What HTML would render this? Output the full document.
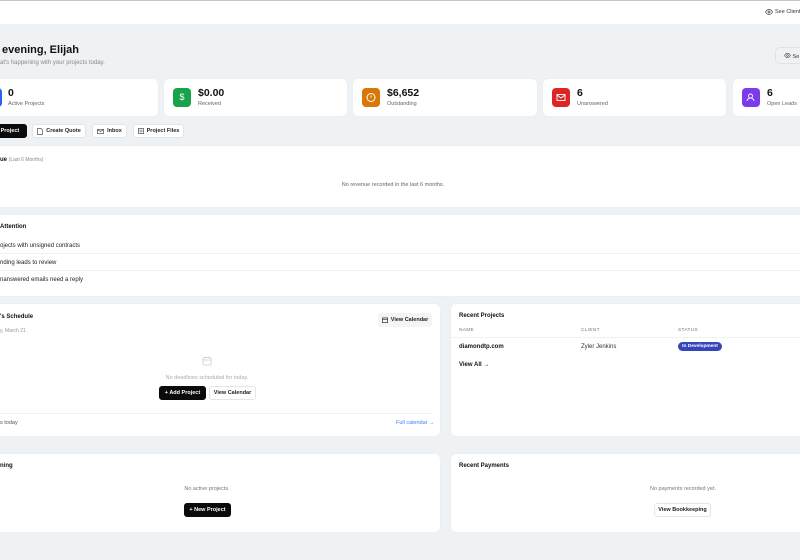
<!DOCTYPE html>
<html><head><meta charset="utf-8"><style>
*{margin:0;padding:0;box-sizing:border-box}
body{width:800px;height:560px;overflow:hidden;background:#eff2f5;font-family:"Liberation Sans",sans-serif;color:#111;position:relative}
.a{position:absolute;white-space:nowrap}
.card{position:absolute;background:#fff;border-radius:5px;box-shadow:0 0 1px rgba(0,0,0,.08)}
.ic{position:absolute;width:18px;height:19px;border-radius:4px;top:9px;left:9px}
.val{position:absolute;left:34px;top:8px;font-size:10.5px;font-weight:bold}
.lab{position:absolute;left:34px;top:22px;font-size:5.5px;color:#666}
.btn{position:absolute;height:14px;border:1px solid #e3e5e8;border-radius:3px;background:#fff;font-size:5.5px;font-weight:bold;display:flex;align-items:center;justify-content:center;gap:3px;color:#222}
.blk{background:#0b0b0b;color:#fff;border-color:#0b0b0b}
.t{font-size:6.5px;font-weight:bold}
.m{font-size:5.5px;color:#777}
.row{font-size:6px;color:#222}
.hr{position:absolute;height:1px;background:#f0f1f3}
</style></head><body>
<div class="a" style="left:0;top:0;width:800px;height:24px;background:#fff;border-top:1px solid #c8c8c8"></div>
<div class="a" style="left:765px;top:9px;font-size:5.5px;color:#333;display:flex;align-items:center;gap:2px">
<svg width="8" height="6" viewBox="0 0 16 12"><path d="M1 6C3 2 6 1 8 1s5 1 7 5c-2 4-5 5-7 5S3 10 1 6z" fill="none" stroke="#444" stroke-width="1.4"/><circle cx="8" cy="6" r="2" fill="none" stroke="#444" stroke-width="1.4"/></svg>See Client</div>

<div class="a" style="left:2px;top:44px;font-size:11px;font-weight:bold">evening, Elijah</div>
<div class="a" style="left:0;top:60px;font-size:6px;color:#888">at's happening with your projects today.</div>
<div class="a" style="left:775px;top:47px;width:40px;height:17px;border:1px solid #e0e3e6;border-radius:5px;font-size:5.5px;color:#333;padding:5px 0 0 8px">
<svg width="7" height="5" viewBox="0 0 16 12"><path d="M1 6C3 2 6 1 8 1s5 1 7 5c-2 4-5 5-7 5S3 10 1 6z" fill="none" stroke="#444" stroke-width="1.4"/><circle cx="8" cy="6" r="2" fill="none" stroke="#444" stroke-width="1.4"/></svg> Se</div>

<div class="card" style="left:-30px;top:79px;width:188px;height:37px"><div class="ic" style="left:14px;background:#2563eb"></div><div class="val" style="left:38px">0</div><div class="lab" style="left:38px">Active Projects</div></div>
<div class="card" style="left:164px;top:79px;width:183px;height:37px"><div class="ic" style="background:#16a34a;color:#fff;font-size:9px;text-align:center;line-height:19px">$</div><div class="val">$0.00</div><div class="lab">Received</div></div>
<div class="card" style="left:353px;top:79px;width:184px;height:37px"><div class="ic" style="background:#d97706"><svg width="18" height="19" viewBox="0 0 18 19"><circle cx="9" cy="9.5" r="4" fill="none" stroke="#fff" stroke-width="1"/><path d="M9 7.5v2" stroke="#fff" stroke-width="1"/></svg></div><div class="val">$6,652</div><div class="lab">Outstanding</div></div>
<div class="card" style="left:543px;top:79px;width:183px;height:37px"><div class="ic" style="background:#dc2626"><svg width="18" height="19" viewBox="0 0 18 19"><rect x="5" y="6.5" width="8" height="6" fill="none" stroke="#fff" stroke-width=".9"/><path d="M5 7l4 3 4-3" fill="none" stroke="#fff" stroke-width=".9"/></svg></div><div class="val">6</div><div class="lab">Unanswered</div></div>
<div class="card" style="left:733px;top:79px;width:100px;height:37px"><div class="ic" style="background:#7c3aed"><svg width="18" height="19" viewBox="0 0 18 19"><circle cx="8.5" cy="8" r="2" fill="none" stroke="#fff" stroke-width=".9"/><path d="M5 13c0-2 2-3 3.5-3s3.5 1 3.5 3" fill="none" stroke="#fff" stroke-width=".9"/></svg></div><div class="val">6</div><div class="lab">Open Leads</div></div>

<div class="btn blk" style="left:-20px;top:124px;width:47px">New Project</div>
<div class="btn" style="left:32px;top:124px;width:54px"><svg width="6" height="7" viewBox="0 0 6 7"><path d="M.5.5h3.5l1.5 1.5v4.5h-5z" fill="none" stroke="#555" stroke-width=".7"/></svg>Create Quote</div>
<div class="btn" style="left:92px;top:124px;width:35px"><svg width="7" height="5" viewBox="0 0 7 5"><rect x=".4" y=".4" width="6.2" height="4.2" fill="none" stroke="#555" stroke-width=".7"/><path d="M.5.6l3 2 3-2" fill="none" stroke="#555" stroke-width=".7"/></svg>Inbox</div>
<div class="btn" style="left:133px;top:124px;width:51px"><svg width="6" height="6" viewBox="0 0 6 6"><rect x=".4" y=".4" width="5.2" height="5.2" fill="none" stroke="#555" stroke-width=".7"/><path d="M.4 3h5.2M3 .4v5.2" stroke="#555" stroke-width=".5"/></svg>Project Files</div>

<div class="card" style="left:-10px;top:146px;width:820px;height:61px"></div>
<div class="a t" style="left:0;top:157px;font-size:6px">ue <span style="font-weight:normal;color:#888;font-size:5px">(Last 6 Months)</span></div>
<div class="a m" style="left:393px;top:182px;transform:translateX(-50%);color:#666">No revenue recorded in the last 6 months.</div>

<div class="card" style="left:-10px;top:215px;width:820px;height:81px"></div>
<div class="a t" style="left:0;top:224px;font-size:6px">Attention</div>
<div class="a row" style="left:0;top:243px">ojects with unsigned contracts</div>
<div class="hr" style="left:0;top:253px;width:800px"></div>
<div class="a row" style="left:0;top:260px">nding leads to review</div>
<div class="hr" style="left:0;top:270px;width:800px"></div>
<div class="a row" style="left:0;top:277px">nanswered emails need a reply</div>

<div class="card" style="left:-10px;top:304px;width:450px;height:132px"></div>
<div class="a t" style="left:0;top:314px;font-size:6px">'s Schedule</div>
<div class="a m" style="left:0;top:328px;font-size:5px;color:#999">y, March 21</div>
<div class="btn" style="left:378px;top:313px;width:54px;background:#f3f4f6;border-color:#f3f4f6"><svg width="6" height="6" viewBox="0 0 6 6"><rect x=".4" y=".9" width="5.2" height="4.7" fill="none" stroke="#333" stroke-width=".7"/><path d="M.4 2.3h5.2" stroke="#333" stroke-width=".7"/></svg>View Calendar</div>
<svg class="a" style="left:202px;top:356px" width="10" height="10" viewBox="0 0 10 10"><rect x="1" y="1.5" width="8" height="7.5" rx="1" fill="none" stroke="#ccc" stroke-width=".8"/><path d="M1 4h8M3 .5v2M7 .5v2" stroke="#ccc" stroke-width=".8"/></svg>
<div class="a m" style="left:207px;top:375px;transform:translateX(-50%);color:#aaa">No deadlines scheduled for today.</div>
<div class="btn blk" style="left:159px;top:386px;width:47px">+ Add Project</div>
<div class="btn" style="left:209px;top:386px;width:47px">View Calendar</div>
<div class="hr" style="left:0;top:413px;width:432px"></div>
<div class="a m" style="left:0;top:420px;color:#555">s today</div>
<div class="a" style="left:396px;top:420px;font-size:5.5px;color:#3b82f6">Full calendar →</div>

<div class="card" style="left:451px;top:304px;width:360px;height:132px"></div>
<div class="a t" style="left:459px;top:313px;font-size:6px">Recent Projects</div>
<div class="a" style="left:459px;top:328px;font-size:4.8px;color:#777;letter-spacing:.3px">NAME</div>
<div class="a" style="left:581px;top:328px;font-size:4.8px;color:#777;letter-spacing:.3px">CLIENT</div>
<div class="a" style="left:678px;top:328px;font-size:4.8px;color:#777;letter-spacing:.3px">STATUS</div>
<div class="hr" style="left:451px;top:337px;width:349px"></div>
<div class="a" style="left:459px;top:344px;font-size:6px;font-weight:bold">diamondtp.com</div>
<div class="a" style="left:581px;top:344px;font-size:6px;color:#333">Zyler Jenkins</div>
<div class="a" style="left:678px;top:342px;width:44px;height:9px;border-radius:5px;background:#3546b8;color:#fff;font-size:4.8px;font-weight:bold;text-align:center;line-height:9px">In Development</div>
<div class="a" style="left:459px;top:362px;font-size:6px;font-weight:bold">View All →</div>

<div class="card" style="left:-10px;top:454px;width:450px;height:78px"></div>
<div class="a t" style="left:0;top:463px;font-size:6px">ning</div>
<div class="a m" style="left:207px;top:486px;transform:translateX(-50%);color:#777">No active projects.</div>
<div class="btn blk" style="left:184px;top:503px;width:47px">+ New Project</div>

<div class="card" style="left:451px;top:454px;width:360px;height:78px"></div>
<div class="a t" style="left:459px;top:463px;font-size:6px">Recent Payments</div>
<div class="a m" style="left:683px;top:486px;transform:translateX(-50%);color:#777">No payments recorded yet.</div>
<div class="btn" style="left:654px;top:503px;width:57px">View Bookkeeping</div>
</body></html>
